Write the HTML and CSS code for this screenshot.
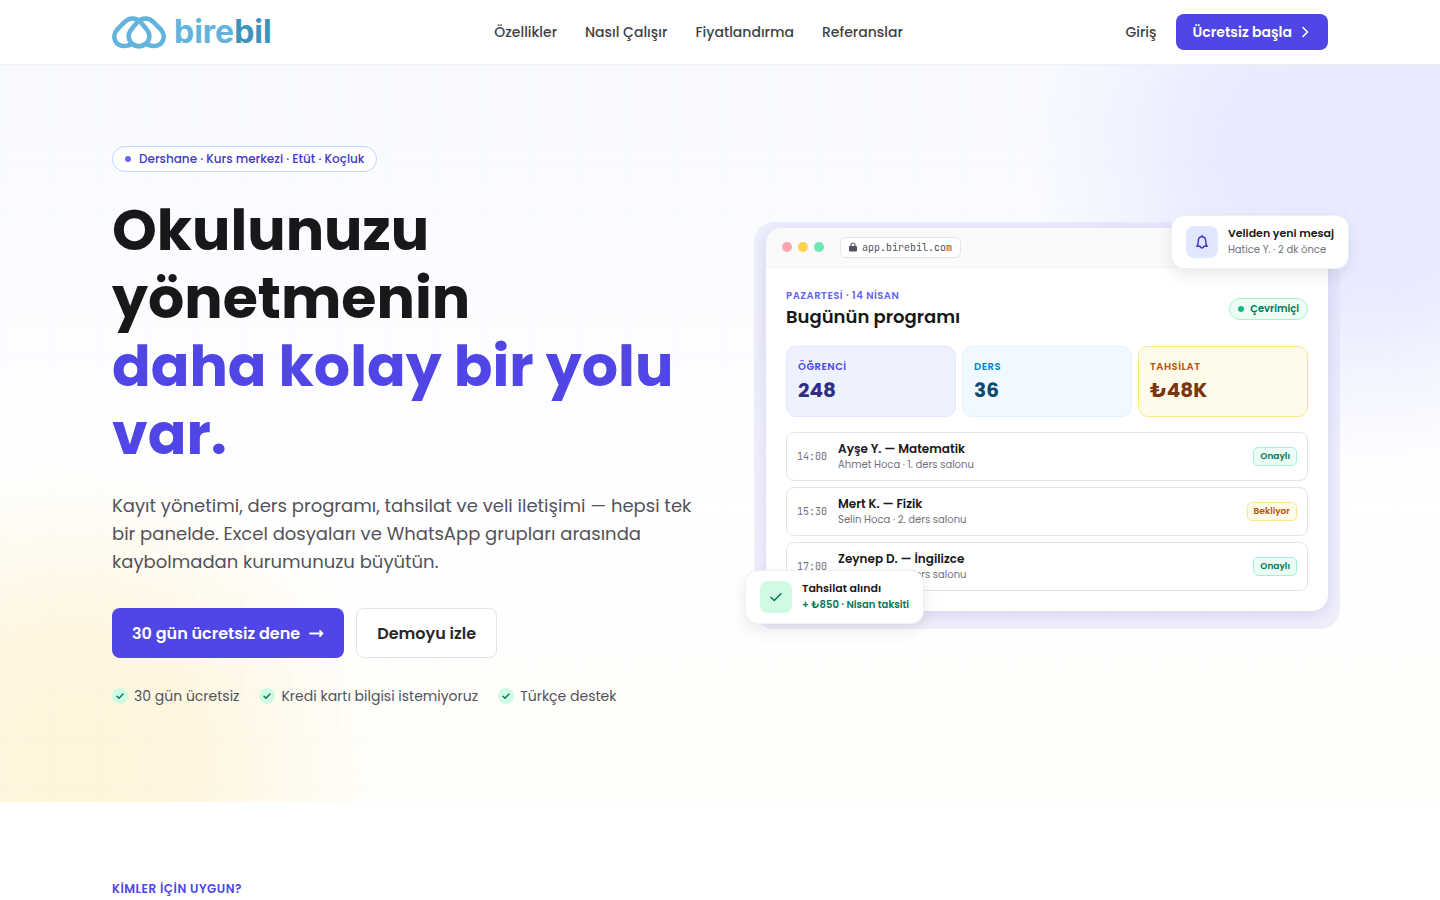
FILE: index.html
```html
<!DOCTYPE html>
<html lang="tr">
<head>
  <meta charset="UTF-8" />
  <meta name="viewport" content="width=device-width, initial-scale=1.0" />
  <title>birebil</title>
  <link rel="stylesheet" href="styles.css">
</head>
<body>
  <header class="header">
    <div class="container header-inner">
      <a class="logo" href="#">
        <svg width="54" height="34" viewBox="0 0 54 34" fill="none" stroke="#62b4dc" stroke-width="4.6" stroke-linejoin="round">
          <path d="M20.5 3.5C17 3.500 14.800 4.800 12.500 7.200L5.500 14.200C-0.500 20.500 2.500 31 12 31C15.500 31 18 30.200 20 28.500C22 30.200 24.300 31.200 27 31.200C35.500 31.200 40 22.500 35.500 15.500C33 12 31 9.800 28.500 7C26.300 4.600 24 3.500 20.500 3.500Z" />
          <path d="M33.5 3.5C37 3.500 39.200 4.800 41.500 7.200L48.500 14.200C54.500 20.500 51.500 31 42 31C38.500 31 36 30.200 34 28.500C32 30.200 29.700 31.200 27 31.200C18.500 31.200 14 22.500 18.500 15.500C21 12 23 9.800 25.500 7C27.700 4.600 30 3.500 33.500 3.500Z" />
        </svg>
        <span class="logo-text">bire<span class="logo-dark">bil</span></span>
      </a>
      <nav class="nav">
        <a href="#ozellikler">Özellikler</a>
        <a href="#nasil">Nasıl Çalışır</a>
        <a href="#fiyat">Fiyatlandırma</a>
        <a href="#referanslar">Referanslar</a>
      </nav>
      <div class="header-actions">
        <a class="login" href="#giris">Giriş</a>
        <a class="btn btn-primary btn-small" href="#basla">Ücretsiz başla
          <svg width="14" height="14" viewBox="0 0 14 14" fill="none" stroke="currentColor" stroke-width="1.6" stroke-linecap="round" stroke-linejoin="round"><path d="M5 2.500L9.500 7L5 11.500" /></svg>
        </a>
      </div>
    </div>
  </header>

  <main>
    <section class="hero">
      <div class="container hero-grid">
        <div class="hero-text">
          <div class="pill"><i class="dot"></i>Dershane · Kurs merkezi · Etüt · Koçluk</div>
          <h1>Okulunuzu yönetmenin <span class="accent">daha kolay bir yolu var.</span></h1>
          <p class="lead">Kayıt yönetimi, ders programı, tahsilat ve veli iletişimi — hepsi tek bir panelde. Excel dosyaları ve WhatsApp grupları arasında kaybolmadan kurumunuzu büyütün.</p>
          <div class="cta">
            <a class="btn btn-primary btn-large" href="#dene">30 gün ücretsiz dene
              <svg width="16" height="16" viewBox="0 0 16 16" fill="none" stroke="currentColor" stroke-width="1.8" stroke-linecap="round" stroke-linejoin="round"><path d="M2 8.500H14.500M12 5.800L14.500 8.500L12 11.200" /></svg>
            </a>
            <a class="btn btn-outline btn-large" href="#demo">Demoyu izle</a>
          </div>
          <ul class="trust">
            <li><span class="tick"><svg width="10" height="10" viewBox="0 0 10 10"><path d="M2 5.200L4 7.200L8 3" /></svg></span>30 gün ücretsiz</li>
            <li><span class="tick"><svg width="10" height="10" viewBox="0 0 10 10"><path d="M2 5.200L4 7.200L8 3" /></svg></span>Kredi kartı bilgisi istemiyoruz</li>
            <li><span class="tick"><svg width="10" height="10" viewBox="0 0 10 10"><path d="M2 5.200L4 7.200L8 3" /></svg></span>Türkçe destek</li>
          </ul>
        </div>

        <div class="mockup">
          <div class="window">
            <div class="window-bar">
              <span class="light red"></span>
              <span class="light yellow"></span>
              <span class="light green"></span>
              <span class="url">
                <svg width="8" height="10" viewBox="0 0 8 10"><rect x="0" y="4" width="8" height="5.500" rx="1" fill="#52525b" /><path d="M2 4.500V3a2 2 0 0 1 4 0v1.500" fill="none" stroke="#52525b" stroke-width="1.200" /></svg>
                app.birebil.com
              </span>
            </div>
            <div class="window-body">
              <div class="program-head">
                <div>
                  <div class="date">PAZARTESİ · 14 NİSAN</div>
                  <h2>Bugünün programı</h2>
                </div>
                <span class="online"><i class="dot"></i>Çevrimiçi</span>
              </div>
              <div class="stats">
                <div class="stat stat-indigo"><div class="stat-label">ÖĞRENCİ</div><div class="stat-value">248</div></div>
                <div class="stat stat-sky"><div class="stat-label">DERS</div><div class="stat-value">36</div></div>
                <div class="stat stat-amber"><div class="stat-label">TAHSİLAT</div><div class="stat-value">₺48K</div></div>
              </div>
              <ul class="lessons">
                <li class="lesson">
                  <time>14:00</time>
                  <div class="lesson-info"><strong>Ayşe Y. — Matematik</strong><span>Ahmet Hoca · 1. ders salonu</span></div>
                  <span class="badge ok">Onaylı</span>
                </li>
                <li class="lesson">
                  <time>15:30</time>
                  <div class="lesson-info"><strong>Mert K. — Fizik</strong><span>Selin Hoca · 2. ders salonu</span></div>
                  <span class="badge wait">Bekliyor</span>
                </li>
                <li class="lesson">
                  <time>17:00</time>
                  <div class="lesson-info"><strong>Zeynep D. — İngilizce</strong><span>Selin Hoca · 2. ders salonu</span></div>
                  <span class="badge ok">Onaylı</span>
                </li>
              </ul>
            </div>
          </div>

          <div class="toast toast-message">
            <span class="toast-icon indigo"><svg width="16" height="16" viewBox="0 0 16 16" fill="none" stroke="#4338ca" stroke-width="1.500" stroke-linecap="round" stroke-linejoin="round"><path d="M2.800 12.200C4 11 4.300 9.500 4.300 7.200C4.300 4.500 5.800 2.700 8 2.700C10.200 2.700 11.700 4.500 11.700 7.200C11.700 9.500 12 11 13.200 12.200H10.200M2.800 12.200H5.800M6 12.200C6.500 14.500 9.500 14.500 10 12.200M8 1.600V2.700" /></svg></span>
            <div><strong>Veliden yeni mesaj</strong><span class="toast-sub">Hatice Y. · 2 dk önce</span></div>
          </div>
          <div class="toast toast-payment">
            <span class="toast-icon mint"><svg width="16" height="16" viewBox="0 0 16 16" fill="none" stroke="#047857" stroke-width="1.600" stroke-linecap="round" stroke-linejoin="round"><path d="M3 8.500L6.200 11.500L13 4.800" /></svg></span>
            <div><strong>Tahsilat alındı</strong><span class="toast-sub paid">+ ₺850 · Nisan taksiti</span></div>
          </div>
        </div>
      </div>
    </section>

    <section class="audience">
      <div class="container">
        <p class="eyebrow">KİMLER İÇİN UYGUN?</p>
      </div>
    </section>
  </main>
</body>
</html>
```

FILE: styles.css
```css
* {
  box-sizing: border-box;
}
body {
  margin: 0;
  font-family: Poppins, Inter, sans-serif;
  color: #18181b;
  background: #fff;
}
a {
  color: inherit;
  text-decoration: none;
}
h1, h2, p, ul {
  margin: 0;
  padding: 0;
}
ul {
  list-style: none;
}
.container {
  max-width: 1280px;
  margin: 0 auto;
  padding: 0 32px;
}

/* header */
.header {
  background: #fff;
  border-bottom: 1px solid #f1f1f5;
}
.header-inner {
  display: flex;
  align-items: center;
  justify-content: space-between;
  height: 64px;
}
.logo {
  display: flex;
  align-items: center;
  gap: 8px;
}
.logo-text {
  font-family: Inter, sans-serif;
  font-size: 32px;
  line-height: 36px;
  font-weight: 700;
  color: #62b4dc;
}
.logo-dark {
  color: #3d93b8;
}
.nav {
  display: flex;
  gap: 28px;
  font-size: 14px;
  font-weight: 500;
  color: #3f3f46;
}
.header-actions {
  display: flex;
  align-items: center;
  gap: 20px;
}
.login {
  font-size: 14px;
  font-weight: 500;
  color: #3f3f46;
}
.btn {
  display: inline-flex;
  align-items: center;
  gap: 6px;
  border-radius: 8px;
  font-weight: 600;
}
.btn-primary {
  background: #4f46e5;
  color: #fff;
}
.btn-outline {
  background: #fff;
  border: 1px solid #e4e4e7;
  color: #27272a;
}
.btn-small {
  height: 36px;
  padding: 0 16px;
  font-size: 14px;
}
.btn-large {
  height: 50px;
  padding: 0 20px;
  gap: 8px;
  font-size: 16px;
}

/* hero */
.hero {
  padding: 81px 0 96px;
  background:
    linear-gradient(to right, rgba(99, 102, 241, 0.02) 1px, transparent 1px) 0 0 / 48px 48px,
    linear-gradient(to bottom, rgba(99, 102, 241, 0.02) 1px, transparent 1px) 0 0 / 48px 48px,
    radial-gradient(340px 310px at 95% 12%, #e8eaff 0%, #e9ecff 45%, rgba(238, 240, 255, 0) 100%),
    radial-gradient(310px 300px at 5% 94%, #fef5da 0%, #fef6e0 40%, rgba(254, 247, 228, 0) 100%),
    linear-gradient(#f8faff, #fff 60%, #fffefa);
}
.hero-grid {
  display: grid;
  grid-template-columns: 1.05fr 1fr;
  gap: 64px;
  align-items: center;
}
.pill {
  display: flex;
  align-items: center;
  gap: 8px;
  width: fit-content;
  height: 26px;
  padding: 0 12px;
  border: 1px solid #c7d2fe;
  border-radius: 13px;
  background: #fff;
  color: #4338ca;
  font-size: 12px;
  font-weight: 500;
}
.dot {
  width: 6px;
  height: 6px;
  border-radius: 50%;
  background: #6366f1;
}
h1 {
  margin-top: 24px;
  font-size: 57px;
  line-height: 68px;
  font-weight: 700;
}
.accent {
  display: block;
  color: #4f46e5;
}
.lead {
  margin-top: 24px;
  font-size: 18px;
  line-height: 28px;
  color: #52525b;
}
.cta {
  display: flex;
  gap: 12px;
  margin-top: 32px;
}
.trust {
  display: flex;
  gap: 20px;
  margin-top: 28px;
  font-size: 14px;
  line-height: 20px;
  color: #52525b;
}
.trust li {
  display: flex;
  align-items: center;
  gap: 6px;
}
.tick {
  display: grid;
  place-items: center;
  width: 16px;
  height: 16px;
  border-radius: 50%;
  background: #d1fae5;
}
.tick path {
  fill: none;
  stroke: #047857;
  stroke-width: 1.4;
  stroke-linecap: round;
  stroke-linejoin: round;
}

/* app preview */
.mockup {
  position: relative;
  margin-bottom: 14px;
}
.mockup::before {
  content: "";
  position: absolute;
  inset: -6px -12px -18px;
  border-radius: 20px;
  background: rgba(226, 227, 250, 0.6);
}
.window {
  position: relative;
  overflow: hidden;
  border-radius: 16px;
  background: #fff;
  box-shadow: 0 4px 14px rgba(49, 46, 129, 0.12);
}
.window-bar {
  display: flex;
  align-items: center;
  gap: 6px;
  height: 40px;
  padding: 0 16px;
  background: #fafafa;
  border-bottom: 1px solid #f4f4f5;
}
.light {
  width: 10px;
  height: 10px;
  border-radius: 50%;
}
.red {
  background: #fda4af;
}
.yellow {
  background: #fcd34d;
}
.green {
  background: #6ee7b7;
}
.url {
  display: flex;
  align-items: center;
  gap: 5px;
  height: 21px;
  margin-left: 10px;
  padding: 0 8px;
  border: 1px solid #e4e4e7;
  border-radius: 6px;
  background: #fff;
  font-family: "JetBrains Mono", "DejaVu Sans Mono", monospace;
  font-size: 10px;
  color: #52525b;
}
.window-body {
  padding: 20px;
}
.program-head {
  display: flex;
  align-items: center;
  justify-content: space-between;
}
.date {
  font-size: 10px;
  line-height: 15px;
  font-weight: 600;
  letter-spacing: 0.5px;
  color: #6366f1;
}
h2 {
  font-size: 18px;
  line-height: 27px;
  font-weight: 600;
}
.online {
  display: flex;
  align-items: center;
  gap: 6px;
  height: 22px;
  padding: 0 8px;
  border: 1px solid #a7f3d0;
  border-radius: 11px;
  background: #ecfdf5;
  color: #047857;
  font-size: 10px;
  font-weight: 600;
}
.online .dot {
  background: #10b981;
}
.stats {
  display: grid;
  grid-template-columns: repeat(3, 1fr);
  gap: 6px;
  margin-top: 16px;
}
.stat {
  padding: 11px;
  border: 1px solid;
  border-radius: 10px;
}
.stat-label {
  font-size: 10px;
  line-height: 17px;
  font-weight: 600;
  letter-spacing: 0.5px;
}
.stat-value {
  font-size: 20px;
  line-height: 30px;
  font-weight: 700;
}
.stat-indigo {
  background: #eef2ff;
  border-color: #e0e7ff;
  color: #312e81;
}
.stat-indigo .stat-label {
  color: #4f46e5;
}
.stat-sky {
  background: #f0f9ff;
  border-color: #e0f2fe;
  color: #0c4a6e;
}
.stat-sky .stat-label {
  color: #0284c7;
}
.stat-amber {
  background: #fffbeb;
  border-color: #fde68a;
  color: #78350f;
}
.stat-amber .stat-label {
  color: #b45309;
}
.lessons {
  display: grid;
  gap: 6px;
  margin-top: 15px;
}
.lesson {
  display: flex;
  align-items: center;
  height: 49px;
  padding: 0 10px;
  gap: 11px;
  border: 1px solid #e4e4e7;
  border-radius: 8px;
}
.lesson time {
  font-family: "JetBrains Mono", "DejaVu Sans Mono", monospace;
  font-size: 10px;
  color: #71717a;
}
.lesson-info {
  flex: 1;
}
.lesson-info strong, .lesson-info span {
  display: block;
}
.lesson-info strong {
  font-size: 12px;
  line-height: 17px;
  font-weight: 600;
}
.lesson-info span {
  font-size: 10px;
  line-height: 15px;
  color: #71717a;
}
.badge {
  padding: 0 6px;
  border: 1px solid;
  border-radius: 5px;
  font-size: 9px;
  line-height: 17px;
  font-weight: 600;
}
.ok {
  background: #ecfdf5;
  border-color: #a7f3d0;
  color: #047857;
}
.wait {
  background: #fffbeb;
  border-color: #fde68a;
  color: #b45309;
}

/* floating notifications */
.toast {
  position: absolute;
  display: flex;
  align-items: center;
  gap: 10px;
  height: 52px;
  padding: 0 14px;
  border-radius: 12px;
  background: #fff;
  box-shadow: 0 0 0 1px #efeff5, 0 6px 16px rgba(24, 24, 60, 0.1);
  white-space: nowrap;
}
.toast-message {
  top: -12px;
  right: -20px;
}
.toast-payment {
  bottom: -12px;
  left: -20px;
}
.toast-icon {
  display: grid;
  place-items: center;
  width: 32px;
  height: 32px;
  border-radius: 8px;
}
.indigo {
  background: #e0e7ff;
}
.mint {
  background: #d1fae5;
}
.toast strong, .toast-sub {
  display: block;
}
.toast strong {
  font-size: 11px;
  line-height: 17px;
  font-weight: 600;
}
.toast-sub {
  font-size: 10px;
  line-height: 16px;
  color: #71717a;
}
.paid {
  font-weight: 600;
  color: #047857;
}

.audience {
  padding-top: 78px;
}
.eyebrow {
  font-size: 12px;
  line-height: 18px;
  font-weight: 600;
  letter-spacing: 0.5px;
  color: #4f46e5;
}
```
